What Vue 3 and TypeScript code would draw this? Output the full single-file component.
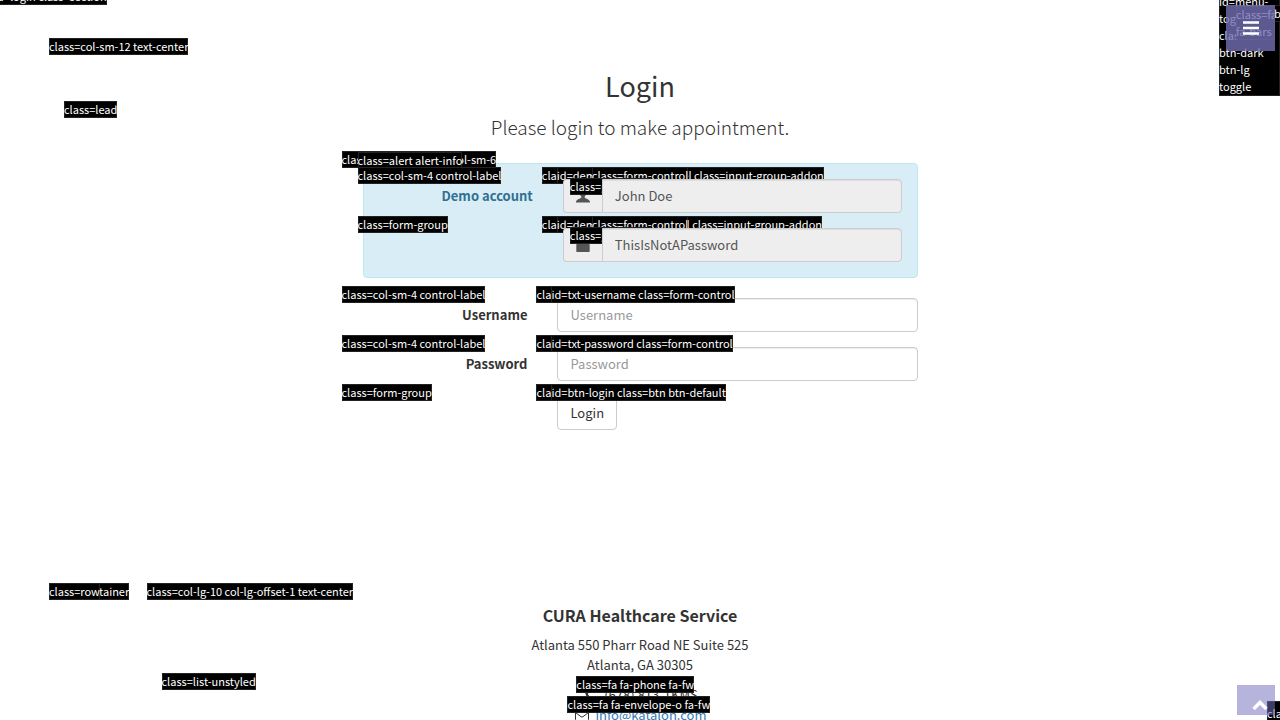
<script setup lang="ts">
import { ref } from 'vue'

interface DemoField {
  id: string
  label: string
  value: string
  tag: string
  icon: string
}

interface LoginField {
  id: string
  label: string
  type: string
  tag: string
}

const demoFields: DemoField[] = [
  {
    id: 'demo-username',
    label: 'Demo account',
    value: 'John Doe',
    tag: 'id=demo_username_label class=input-group-addon',
    icon: 'M7 0a3.4 3.4 0 0 1 3.4 3.6c0 1.7-.8 3.3-1.7 4v1.1c1 .9 5.3 1.900 5.300 4.300v.6H0V13c0-2.400 4.300-3.400 5.300-4.300V7.600c-.9-.7-1.700-2.300-1.700-4A3.400 3.400 0 0 1 7 0Z',
  },
  {
    id: 'demo-password',
    label: '',
    value: 'ThisIsNotAPassword',
    tag: 'id=demo_password_label class=input-group-addon',
    icon: 'M2.500 6V4.500a4.500 4.500 0 0 1 9 0V6H13a.7.7 0 0 1 .7.7v6.600a.7.7 0 0 1-.7.7H1a.7.7 0 0 1-.7-.7V6.700A.7.7 0 0 1 1 6Zm2 0h5V4.500a2.500 2.500 0 0 0-5 0Z',
  },
]

const loginFields: LoginField[] = [
  { id: 'txt-username', label: 'Username', type: 'text', tag: 'id=txt-username class=form-control' },
  { id: 'txt-password', label: 'Password', type: 'password', tag: 'id=txt-password class=form-control' },
]

const values = ref<Record<string, string>>({ 'txt-username': '', 'txt-password': '' })
</script>

<template>
  <div class="page">
    <section class="login">
      <span class="tag">id=login class=section</span>
      <div class="container">
        <div class="heading">
          <span class="tag">class=col-sm-12 text-center</span>
          <h2>Login</h2>
          <div class="inset">
            <p class="lead"><span class="tag">class=lead</span>Please login to make appointment.</p>
          </div>
        </div>
        <form class="form" @submit.prevent>
          <span class="tag">class=col-sm-offset-3 col-sm-6</span>
          <span class="tag">class=form-horizontal</span>
          <div class="alert">
            <span class="tag">class=alert alert-info</span>
            <div v-for="field in demoFields" :key="field.id" class="group">
              <span class="tag">class=form-group</span>
              <div class="label-col">
                <span v-if="field.label" class="tag">class=col-sm-4 control-label</span>
                <label v-if="field.label" :for="field.id">{{ field.label }}</label>
              </div>
              <div class="field-col">
                <span class="tag">class=col-sm-8</span>
                <div class="input-group">
                  <span class="tag">{{ field.tag }}</span>
                  <div class="addon">
                    <span class="tag">class=glyphicon</span>
                    <svg width="14" height="14" viewBox="0 0 14 14" aria-hidden="true"><path :d="field.icon" fill="#555" fill-rule="evenodd" /></svg>
                  </div>
                  <div class="addon-field">
                    <span class="tag">class=form-control</span>
                    <input :id="field.id" class="control" type="text" :value="field.value" :aria-label="field.label || 'Demo password'" readonly />
                  </div>
                </div>
              </div>
            </div>
          </div>
          <div v-for="field in loginFields" :key="field.id" class="group">
            <span class="tag">class=form-group</span>
            <div class="label-col">
              <span class="tag">class=col-sm-4 control-label</span>
              <label :for="field.id">{{ field.label }}</label>
            </div>
            <div class="field-col">
              <span class="tag">class=col-sm-8</span>
              <div class="field">
                <span class="tag">{{ field.tag }}</span>
                <input :id="field.id" v-model="values[field.id]" class="control" :type="field.type" :placeholder="field.label" />
              </div>
            </div>
          </div>
          <div class="group">
            <span class="tag">class=form-group</span>
            <div class="label-col"></div>
            <div class="field-col">
              <span class="tag">class=col-sm-8</span>
              <div class="field">
                <span class="tag">id=btn-login class=btn btn-default</span>
                <button class="submit" type="submit">Login</button>
              </div>
            </div>
          </div>
        </form>
      </div>
    </section>

    <footer class="container footer">
      <span class="tag">class=container</span>
      <span class="tag">class=row</span>
      <div class="footer-col">
        <span class="tag">class=col-lg-10 col-lg-offset-1 text-center</span>
        <h4>CURA Healthcare Service</h4>
        <p>Atlanta 550 Pharr Road NE Suite 525<br />Atlanta, GA 30305</p>
        <div class="contact">
          <span class="tag">class=list-unstyled</span>
          <ul>
            <li>
              <span class="icon">
                <span class="tag icon-tag">class=fa fa-phone fa-fw</span>
                <svg width="14" height="14" viewBox="0 0 14 14" aria-hidden="true"><path d="M3.300 1.500 5 4.600 3.800 6c.9 1.800 2.300 3.200 4.200 4.200l1.400-1.300 3.100 1.700c.1 1.500-1 2.600-2.600 2.600C5.500 12.700 1.300 8.500 1.200 4.300c0-1.700.8-2.700 2.100-2.800Z" fill="#333" /></svg>
              </span>
              (678) 813-1KMS
            </li>
            <li>
              <span class="icon">
                <span class="tag icon-tag">class=fa fa-envelope-o fa-fw</span>
                <svg width="14" height="14" viewBox="0 0 14 14" aria-hidden="true"><path d="M1.500 2h11a1 1 0 0 1 1 1v8.500a1 1 0 0 1-1 1h-11a1 1 0 0 1-1-1V3a1 1 0 0 1 1-1ZM.5 4.500 6 8.700q1 .7 2 0l5.500-4.200" fill="none" stroke="#333" /></svg>
              </span>
              <a href="mailto:info@katalon.com">info@katalon.com</a>
            </li>
          </ul>
        </div>
      </div>
    </footer>

    <nav class="corner">
      <span class="tag menu-tag">id=menu-toggle class=btn btn-dark btn-lg toggle</span>
      <span class="tag bars-tag">class=fa fa-bars</span>
      <button class="menu" type="button" aria-label="Menu">
        <svg width="16" height="14" viewBox="0 0 16 14" aria-hidden="true"><path d="M0 1.500h16M0 7h16M0 12.500h16" stroke="#fff" stroke-width="2.700" /></svg>
      </button>
      <span class="tag side-tag">btn</span>
    </nav>
    <div class="to-top">
      <span class="tag top-tag">class=fa</span>
      <a href="#" aria-label="Back to top">
        <svg width="16" height="11" viewBox="0 0 16 11" aria-hidden="true"><path d="m1.500 9 6.500-6.500L14.500 9" fill="none" stroke="#fff" stroke-width="3.400" /></svg>
      </a>
    </div>
  </div>
</template>

<style>
body {
  margin: 0;
}
</style>

<style scoped>
.page,
.page * {
  box-sizing: border-box;
}

.page {
  position: relative;
  height: 100vh;
  overflow: hidden;
  background: #fff;
  color: #333;
  font-family: "Noto Sans CJK SC", "Noto Sans", sans-serif;
  font-size: 13px;
  line-height: 20px;
}

.tag {
  position: absolute;
  z-index: 1;
  top: -12px;
  left: -6px;
  height: 17px;
  background: #000;
  box-shadow: inset 0 0 0 1px #222;
  color: #fff;
  font-size: 11px;
  font-weight: 400;
  line-height: 17px;
  text-align: left;
  white-space: nowrap;
}

.login {
  position: relative;
  padding-top: 50px;
}

.container {
  width: 100%;
  max-width: 1170px;
  margin: 0 auto;
}

.heading {
  position: relative;
  padding-top: 20px;
  text-align: center;
}

h2 {
  margin: 0 0 12px;
  font-size: 27px;
  font-weight: 400;
  line-height: 31px;
}

.inset {
  padding: 0 15px;
}

.lead {
  position: relative;
  margin: 0 0 22px;
  font-size: 19px;
  font-weight: 300;
  line-height: 28px;
}

.form {
  position: relative;
  width: 50%;
  margin: 0 auto;
  padding: 0 15px;
}

.alert {
  position: relative;
  margin-bottom: 20px;
  padding: 15px 15px 0;
  border: 1px solid #bce8f1;
  border-radius: 4px;
  background: #d9edf7;
  color: #31708f;
}

.group {
  position: relative;
  display: flex;
  margin: 0 -15px;
  padding-bottom: 15px;
}

.label-col {
  position: relative;
  flex: 0 0 33.333%;
  padding: 7px 15px 0;
  text-align: right;
  font-weight: 700;
}

.field-col {
  position: relative;
  flex: 1;
  padding: 0 15px;
}

.field {
  position: relative;
}

.control {
  display: block;
  width: 100%;
  height: 34px;
  margin: 0;
  padding: 5px 12px 7px;
  border: 1px solid #ccc;
  border-radius: 4px;
  outline: 0;
  background: #fff;
  box-shadow: inset 0 1px 1px rgba(0, 0, 0, 0.075);
  color: #555;
  font: inherit;
}

.control::placeholder {
  color: #999;
  opacity: 1;
}

.input-group {
  position: relative;
  display: flex;
}

.addon {
  position: relative;
  z-index: 2;
  display: flex;
  width: 39px;
  height: 34px;
  align-items: center;
  justify-content: center;
  border: 1px solid #ccc;
  border-right: 0;
  border-radius: 4px 0 0 4px;
  background: #eee;
}

.addon .tag {
  top: -2px;
  left: 6px;
}

.addon-field {
  position: relative;
  flex: 1;
}

.addon-field .tag {
  left: -10px;
}

.addon-field .control {
  position: relative;
  z-index: 3;
  border-radius: 0 4px 4px 0;
  background: #eee;
}

.submit {
  display: block;
  height: 34px;
  padding: 6px 12px;
  border: 1px solid #ccc;
  border-radius: 4px;
  background: #fff;
  color: #333;
  font: inherit;
  line-height: 20px;
}

.footer {
  position: relative;
  margin-top: 150px;
}

.footer-col {
  position: relative;
  width: 83.333%;
  margin: 0 auto;
  padding: 10px 15px 0;
  text-align: center;
}

h4 {
  margin: 0 0 10px;
  font-size: 16px;
  font-weight: 700;
  line-height: 20px;
}

.footer p {
  margin: 0 0 10px;
}

.contact {
  position: relative;
}

ul {
  margin: 0;
  padding: 0;
  list-style: none;
}

li {
  display: flex;
  justify-content: center;
  gap: 4px;
}

.icon {
  position: relative;
  width: 18px;
  height: 20px;
  padding-top: 3px;
  line-height: 14px;
}

.icon-tag {
  top: -9px;
}

a {
  color: #337ab7;
  text-decoration: none;
}

.corner {
  position: absolute;
  z-index: 5;
  top: 5px;
  right: 5px;
}

.corner .menu-tag {
  top: -12px;
  left: -7px;
  width: 61px;
  height: 103px;
  white-space: normal;
}

.corner .bars-tag {
  top: 1px;
  left: 10px;
  width: 39px;
  height: 34px;
  white-space: normal;
}

.corner .side-tag {
  top: 0;
  left: 48px;
}

.menu {
  position: relative;
  z-index: 2;
  display: flex;
  width: 49px;
  height: 46px;
  align-items: center;
  justify-content: center;
  padding: 0;
  border: 0;
  background: rgba(115, 110, 180, 0.8);
}

.to-top {
  position: absolute;
  z-index: 5;
  right: 5px;
  bottom: 5px;
}

.to-top a {
  position: relative;
  z-index: 2;
  display: flex;
  width: 38px;
  height: 30px;
  align-items: flex-end;
  justify-content: flex-end;
  padding: 0 7px 4px 0;
  background: rgba(118, 112, 188, 0.53);
}

.to-top .top-tag {
  top: 16px;
  left: 30px;
  height: 20px;
  line-height: 24px;
}
</style>
